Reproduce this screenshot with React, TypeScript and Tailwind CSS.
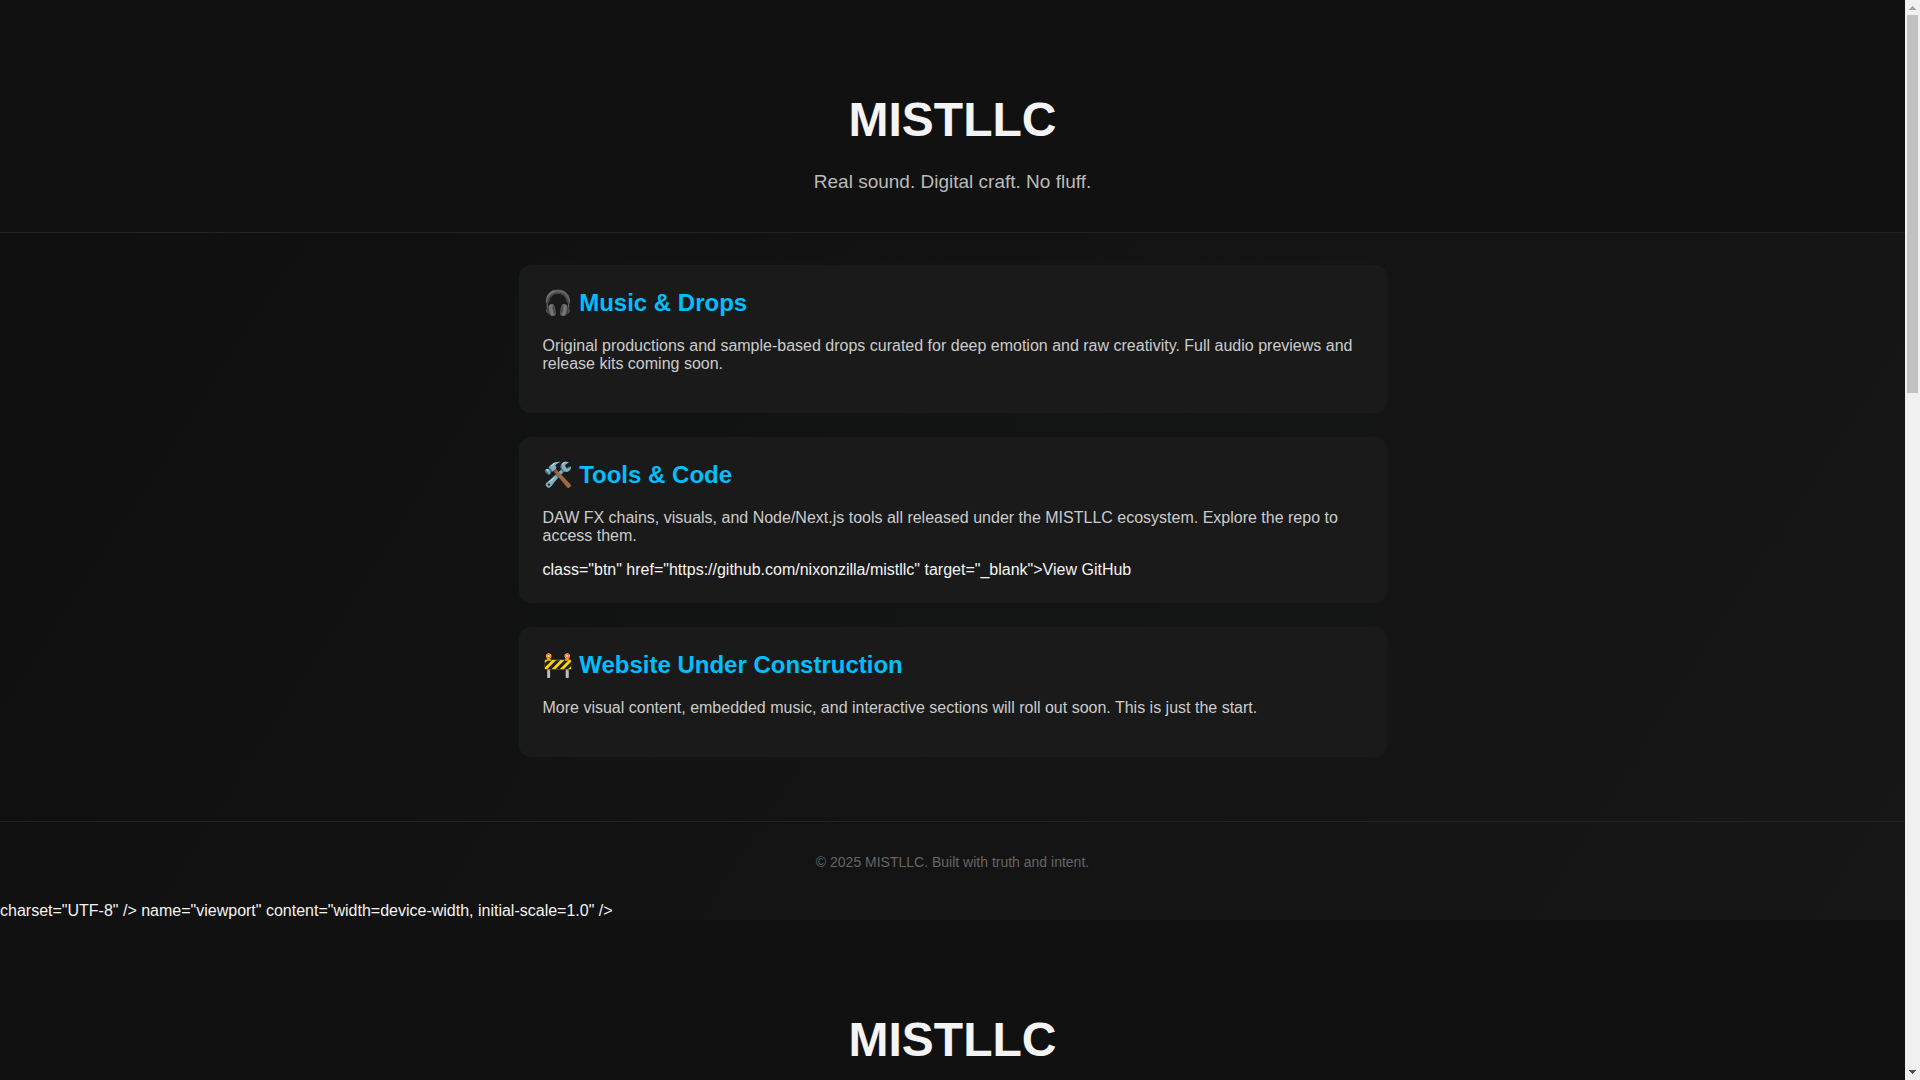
import type { ReactNode } from 'react'

interface HeaderProps {
  tagline?: string
}

interface CardProps {
  icon: string
  title: string
  text: string
  children?: ReactNode
}

function Header({ tagline }: HeaderProps) {
  return (
    <header className="border-b border-[#222] bg-[#111] px-8 pt-[92px] pb-[39px] text-center">
      <h1 className="text-[48px] leading-[55px] font-bold">MISTLLC</h1>
      {tagline && <p className="mt-6 text-[19px] leading-[22px] text-[#bbb]">{tagline}</p>}
    </header>
  )
}

function Card({ icon, title, text, children }: CardProps) {
  return (
    <section className="rounded-xl bg-[#1a1a1a] p-6 shadow-[0_0_20px_rgba(0,255,200,0.03)]">
      <h2 className="mb-5 text-[24px] leading-[28px] font-bold text-[#00bfff]">
        {icon} {title}
      </h2>
      <p className="mb-4 leading-[18px] text-[#ccc]">{text}</p>
      {children}
    </section>
  )
}

function Footer() {
  return (
    <footer className="border-t border-[#222] p-8 text-center text-[14px] leading-[16px] text-[#666]">
      © 2025 MISTLLC. Built with truth and intent.
    </footer>
  )
}

function Scrollbar() {
  return (
    <div className="flex w-[15px] shrink-0 flex-col items-center bg-[#f0f0f0]" aria-hidden="true">
      <svg className="h-[15px] w-[15px] shrink-0" viewBox="0 0 15 15" shapeRendering="crispEdges">
        <path d="M7 6h1v1h1v1h1v1h1v1H4V9h1V8h1V7h1z" fill="#a3a3a3" />
      </svg>
      <div className="flex w-[11px] grow flex-col">
        <div className="h-[36%] bg-[#c1c1c1]" />
      </div>
      <svg className="h-[15px] w-[15px] shrink-0" viewBox="0 0 15 15" shapeRendering="crispEdges">
        <path d="M4 5h7v1h-1v1H9v1H8v1H7V8H6V7H5V6H4z" fill="#505050" />
      </svg>
    </div>
  )
}

export default function App() {
  return (
    <div className="flex h-screen overflow-hidden bg-[#0f0f0f] font-['Liberation_Sans',Arial,sans-serif] text-[16px] text-[#f4f4f4]">
      <div className="min-w-0 grow overflow-hidden bg-[linear-gradient(to_bottom_right,#0f0f0f,#1b1b1b)] bg-[length:100%_3000px]">
        <Header tagline="Real sound. Digital craft. No fluff." />
        <main className="mx-auto flex max-w-[900px] flex-col gap-6 px-4 pt-8 pb-16">
          <Card
            icon="🎧"
            title="Music & Drops"
            text="Original productions and sample-based drops curated for deep emotion and raw creativity. Full audio previews and release kits coming soon."
          />
          <Card
            icon="🛠️"
            title="Tools & Code"
            text="DAW FX chains, visuals, and Node/Next.js tools all released under the MISTLLC ecosystem. Explore the repo to access them."
          >
            <div className="leading-[18px]">
              {'class="btn" href="https://github.com/nixonzilla/mistllc" target="_blank">View GitHub'}
            </div>
          </Card>
          <Card
            icon="🚧"
            title="Website Under Construction"
            text="More visual content, embedded music, and interactive sections will roll out soon. This is just the start."
          />
        </main>
        <Footer />
        <div className="leading-[18px]">
          {'charset="UTF-8" /> name="viewport" content="width=device-width, initial-scale=1.0" />'}
        </div>
        <Header />
      </div>
      <Scrollbar />
    </div>
  )
}
